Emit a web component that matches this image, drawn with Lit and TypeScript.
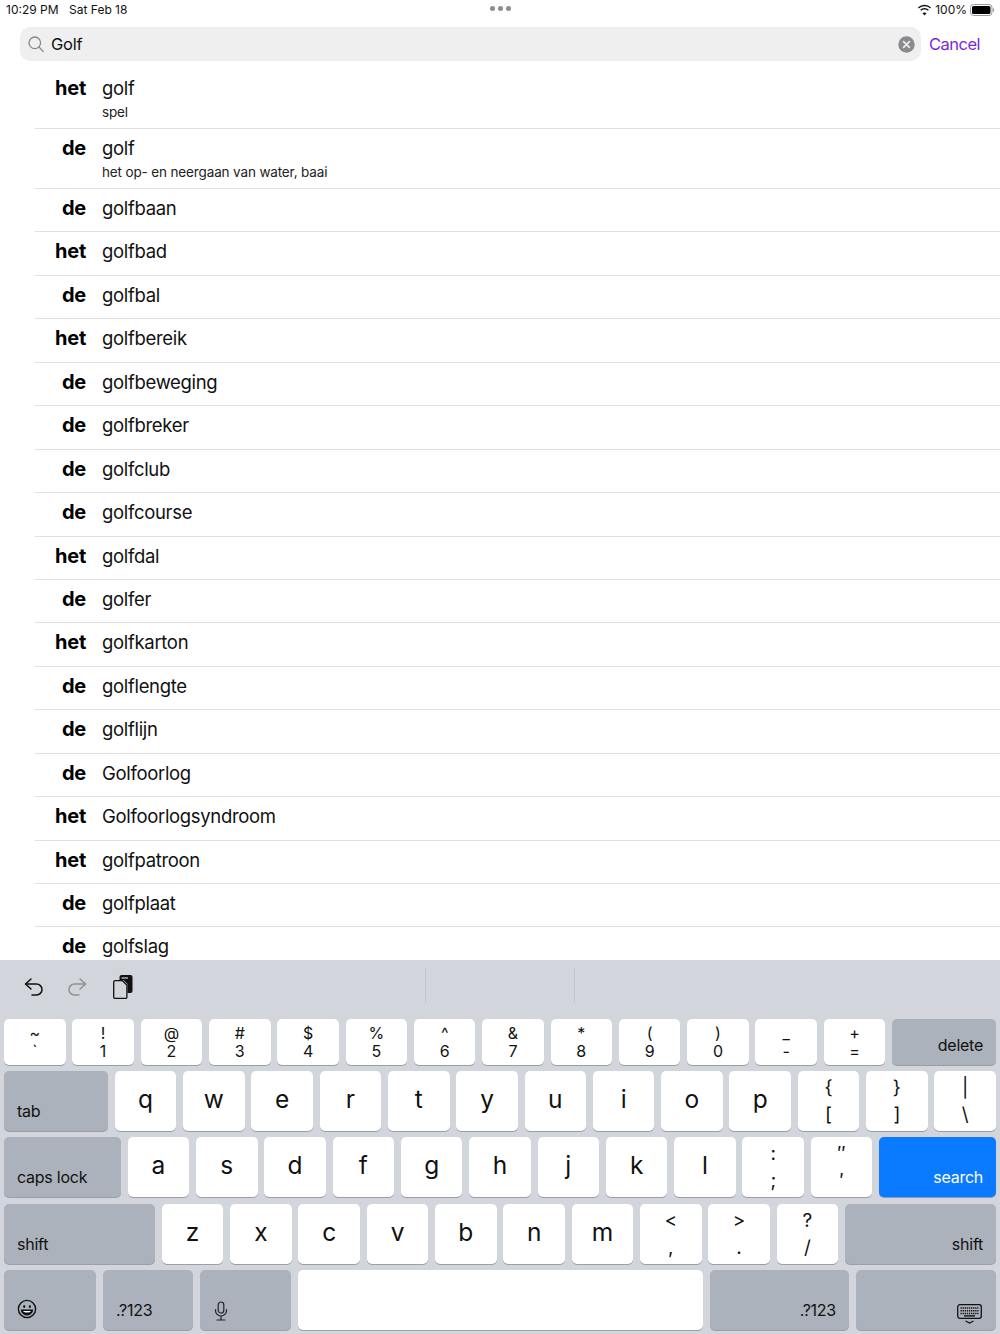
import { LitElement, html, css, svg } from "lit";
import { customElement } from "lit/decorators.js";

const rows: [string, string, string?][] = [
  ["het", "golf", "spel"],
  ["de", "golf", "het op- en neergaan van water, baai"],
  ["de", "golfbaan"], ["het", "golfbad"], ["de", "golfbal"], ["het", "golfbereik"],
  ["de", "golfbeweging"], ["de", "golfbreker"], ["de", "golfclub"], ["de", "golfcourse"],
  ["het", "golfdal"], ["de", "golfer"], ["het", "golfkarton"], ["de", "golflengte"],
  ["de", "golflijn"], ["de", "Golfoorlog"], ["het", "Golfoorlogsyndroom"], ["het", "golfpatroon"],
  ["de", "golfplaat"], ["de", "golfslag"],
];

const sym = (t: string, b: string) => html`<div class="key sym"><span>${t}</span><span>${b}</span></div>`;
const letter = (l: string) => html`<div class="key letter">${l}</div>`;

const emoji = svg`<svg width="20" height="20" viewBox="0 0 20 20" fill="none" stroke="#111" stroke-width="1.4"><circle cx="10" cy="10" r="8.6"/><ellipse cx="7.2" cy="7.4" rx="1" ry="1.5" fill="#111" stroke="none"/><ellipse cx="12.8" cy="7.4" rx="1" ry="1.5" fill="#111" stroke="none"/><path d="M3.8 10.6h12.4c-.2 3.600-3 5.800-6.200 5.800s-6-2.200-6.200-5.800z" fill="#111" stroke="none"/><path d="M6 12h8c-.8 1.200-2.200 1.600-4 1.600s-3.200-.4-4-1.600z" fill="#fff" stroke="none"/></svg>`;
const mic = svg`<svg width="14" height="20" viewBox="0 0 14 20" fill="none" stroke="#222" stroke-width="1.200" stroke-linecap="round"><rect x="4.200" y="1" width="5.600" height="11" rx="2.800"/><path d="M1.500 8.500v1a5.500 5.500 0 0 0 11 0v-1M7 15v3.500M3 19h8"/></svg>`;
const kbd = svg`<svg width="25" height="20" viewBox="0 0 25 20" fill="none"><rect x=".7" y=".7" width="23.600" height="13.600" rx="2.200" stroke="#111" stroke-width="1.300"/><path d="M3.500 4h18M3.500 6.700h18M3.500 9.400h18" stroke="#111" stroke-width="1.500" stroke-dasharray="1.300 .8"/><path d="M7 11.900h11" stroke="#111" stroke-width="1.400"/><path d="M8.500 17l4 2 4-2" stroke="#111" stroke-width="1.200"/></svg>`;

@customElement("app-root")
export class AppRoot extends LitElement {
  static styles = css`
    :host { display: block; width: 1000px; height: 1334px; overflow: hidden; background: #fff; color: #000;
      font-family: Inter, "Liberation Sans", sans-serif; }
    * { box-sizing: border-box; }
    .page { height: 1334px; display: flex; flex-direction: column; }
    .status { height: 27px; flex: none; display: grid; grid-template-columns: 1fr auto 1fr; padding: 3px 5px 0 6px; font-size: 12px; line-height: 14px; color: #111; }
    .status .left { display: flex; gap: 10.500px; }
    .status .dots { display: flex; gap: 3px; padding-top: 3px; }
    .status .dots i { width: 5px; height: 5px; border-radius: 50%; background: #8d8d92; }
    .status .right { display: flex; justify-content: flex-end; align-items: flex-start; gap: 3px; }
    .status .right svg { display: block; margin-top: 1px; }
    .search { flex: none; height: 34px; display: flex; align-items: center; padding-left: 20px; }
    .field { width: 901px; height: 34px; border-radius: 10px; background: #efefef; display: flex; align-items: center; padding: 0 6px 0 8px; }
    .field svg { flex: none; display: block; }
    .field .q { flex: 1; font-size: 16.500px; line-height: 20px; padding: 0 0 0 7px; color: #111; letter-spacing: -.2px; }
    .cancel { margin-left: 8px; font-size: 16.500px; color: #7a28d8; letter-spacing: -.5px; }
    .list { flex: 1; min-height: 0; overflow: hidden; padding: 8px 0 0 35px; }
    .row { display: flex; height: 43.450px; border-bottom: 1px solid #e0e0e2; padding-top: 7px; }
    .row.sub { height: 60px; padding-top: 7px; }
    .row .art { width: 51px; text-align: right; font-weight: 700; font-size: 20px; line-height: 25px; flex: none; letter-spacing: -.25px; }
    .row .body { padding-left: 16px; }
    .row .w { font-size: 18.500px; line-height: 25px; color: #111; letter-spacing: -.32px; }
    .row .d { font-size: 13.500px; line-height: 16px; margin-top: 3px; color: #222; letter-spacing: -.14px; }
    .kb { flex: none; height: 374px; background: #d2d5db; padding: 0 4px; display: flex; flex-direction: column; }
    .tools { height: 59px; flex: none; position: relative; display: flex; align-items: flex-start; padding: 16px 0 0 19px; gap: 21px; }
    .tools svg { display: block; }
    .tools .paste { margin: -1px 0 0 4px; }
    .tools .sep { position: absolute; top: 8px; width: 1px; height: 35px; background: #c1c4ca; }
    .tools .s1 { left: 421px; }
    .tools .s2 { left: 570px; }
    .krow { display: flex; gap: 6.730px; flex: none; height: 60px; margin-bottom: 6.300px; }
    .krow.first { height: 46px; margin-bottom: 6px; }
    .krow.last { gap: 7px; }
    .key { flex: none; width: 61.600px; border-radius: 5px; background: #fff; box-shadow: 0 1px 0 #9a9ea6; color: #111; display: flex; }
    .letter { align-items: center; justify-content: center; font-size: 24.500px; padding-bottom: 4px; }
    .sym { flex-direction: column; align-items: center; justify-content: space-between; font-size: 19px; line-height: 22px; padding: 6px 0 5px; }
    .krow.first .sym { font-size: 16px; line-height: 18px; padding: 5px 0 5px; justify-content: center; }
    .fn { flex: 1 1 0; background: #acb2bb; font-size: 16px; line-height: 20px; align-items: flex-end; padding: 0 13px 10px; letter-spacing: -.25px; }
    .fn.r { justify-content: flex-end; }
    .fn.blue { background: #0a7aff; color: #fff; box-shadow: 0 1px 0 #8a9ab0; }
    .fn.em { padding-bottom: 11px; }
    .fn.kbd { padding: 0 14px 6px; }
    .fn.mic { padding: 0 0 9px 14px; }
    .w92 { flex: none; width: 92px; }
    .w90 { flex: none; width: 90px; }
    .w91 { flex: none; width: 91px; }
    .space { flex: none; width: 405px; }
    .w139 { flex: none; width: 139px; }
  `;

  render() {
    return html`<div class="page">
      <div class="status">
        <div class="left"><span>10:29 PM</span><span>Sat Feb 18</span></div>
        <div class="dots"><i></i><i></i><i></i></div>
        <div class="right">
          <svg width="15" height="12" viewBox="0 0 15 12" fill="#111"><path d="M7.500 2.200c2.200 0 4.200.9 5.600 2.300l1-1.100A9.400 9.400 0 0 0 7.500.7 9.400 9.400 0 0 0 .9 3.400l1 1.100a8 8 0 0 1 5.600-2.300z"/><path d="M7.500 5.400c1.300 0 2.500.5 3.400 1.400l1-1.100a6.300 6.300 0 0 0-8.800 0l1 1.100c.9-.9 2.100-1.400 3.400-1.400z"/><path d="M7.500 8.400c-.8 0-1.500.3-2 .8l2 2.200 2-2.200c-.5-.5-1.200-.8-2-.8z"/></svg>
          <span>100%</span>
          <svg width="25" height="12" viewBox="0 0 25 12" fill="none"><rect x=".5" y=".5" width="21.500" height="11" rx="3" stroke="#9a9a9a"/><rect x="2" y="2" width="18.500" height="8" rx="1.600" fill="#000"/><path d="M23 4v4c.8-.3 1.200-1 1.200-2s-.4-1.700-1.200-2z" fill="#9a9a9a"/></svg>
        </div>
      </div>
      <div class="search">
        <div class="field">
          <svg width="16" height="17" viewBox="0 0 16 17" fill="none" stroke="#8a8a8e" stroke-width="1.300"><circle cx="6.800" cy="6.800" r="5.800"/><path d="M11 11l4.300 4.600" stroke-linecap="round"/></svg>
          <div class="q">Golf</div>
          <svg width="17" height="17" viewBox="0 0 17 17"><circle cx="8.500" cy="8.500" r="8.200" fill="#8a8a8e"/><path d="M5.600 5.600l5.800 5.800M11.400 5.600l-5.800 5.800" stroke="#efefef" stroke-width="1.700" stroke-linecap="round"/></svg>
        </div>
        <div class="cancel">Cancel</div>
      </div>
      <div class="list">
        ${rows.map(([a, w, d]) => html`<div class="row ${d ? "sub" : ""}">
          <div class="art">${a}</div>
          <div class="body"><div class="w">${w}</div>${d ? html`<div class="d">${d}</div>` : ""}</div>
        </div>`)}
      </div>
      <div class="kb">
        <div class="tools">
          <svg width="22" height="22" viewBox="0 0 22 22" fill="none" stroke="#111" stroke-width="1.500" stroke-linecap="round" stroke-linejoin="round"><path d="M8 3L2.500 8 8 13"/><path d="M3 8h10.500a5.500 5.500 0 0 1 0 11H9"/></svg>
          <svg width="22" height="22" viewBox="0 0 22 22" fill="none" stroke="#8f9196" stroke-width="1.500" stroke-linecap="round" stroke-linejoin="round"><path d="M14 3l5.500 5L14 13"/><path d="M19 8H8.500a5.500 5.500 0 0 0 0 11H13"/></svg>
          <svg class="paste" width="20" height="24" viewBox="0 0 20 24"><path d="M6.500 2a2 2 0 0 1 2-2h9a2 2 0 0 1 2 2v14a2 2 0 0 1-2 2h-3V9l-4-4H6.500z" fill="#111"/><path d="M8.500 3h6.500" stroke="#d2d5db" stroke-width="1.200"/><path d="M2.200 5.700h7.300l4.400 4.400V22a1.500 1.500 0 0 1-1.500 1.500H2.200A1.500 1.500 0 0 1 .7 22V7.200a1.500 1.500 0 0 1 1.500-1.500z" fill="#d2d5db" stroke="#111" stroke-width="1.300"/></svg>
          <div class="sep s1"></div><div class="sep s2"></div>
        </div>
        <div class="krow first">
          ${sym("~", "`")}${sym("!", "1")}${sym("@", "2")}${sym("#", "3")}${sym("$", "4")}${sym("%", "5")}${sym("^", "6")}${sym("&", "7")}${sym("*", "8")}${sym("(", "9")}${sym(")", "0")}${sym("_", "-")}${sym("+", "=")}
          <div class="key fn r">delete</div>
        </div>
        <div class="krow">
          <div class="key fn">tab</div>
          ${"qwertyuiop".split("").map(letter)}
          ${sym("{", "[")}${sym("}", "]")}${sym("|", "\\")}
        </div>
        <div class="krow">
          <div class="key fn">caps lock</div>
          ${"asdfghjkl".split("").map(letter)}
          ${sym(":", ";")}${sym("″", "′")}
          <div class="key fn r blue">search</div>
        </div>
        <div class="krow">
          <div class="key fn">shift</div>
          ${"zxcvbnm".split("").map(letter)}
          ${sym("<", ",")}${sym(">", ".")}${sym("?", "/")}
          <div class="key fn r">shift</div>
        </div>
        <div class="krow last">
          <div class="key fn em w92">${emoji}</div>
          <div class="key fn w90">.?123</div>
          <div class="key fn mic w91">${mic}</div>
          <div class="key space"></div>
          <div class="key fn r w139">.?123</div>
          <div class="key fn r kbd">${kbd}</div>
        </div>
      </div>
    </div>`;
  }
}
